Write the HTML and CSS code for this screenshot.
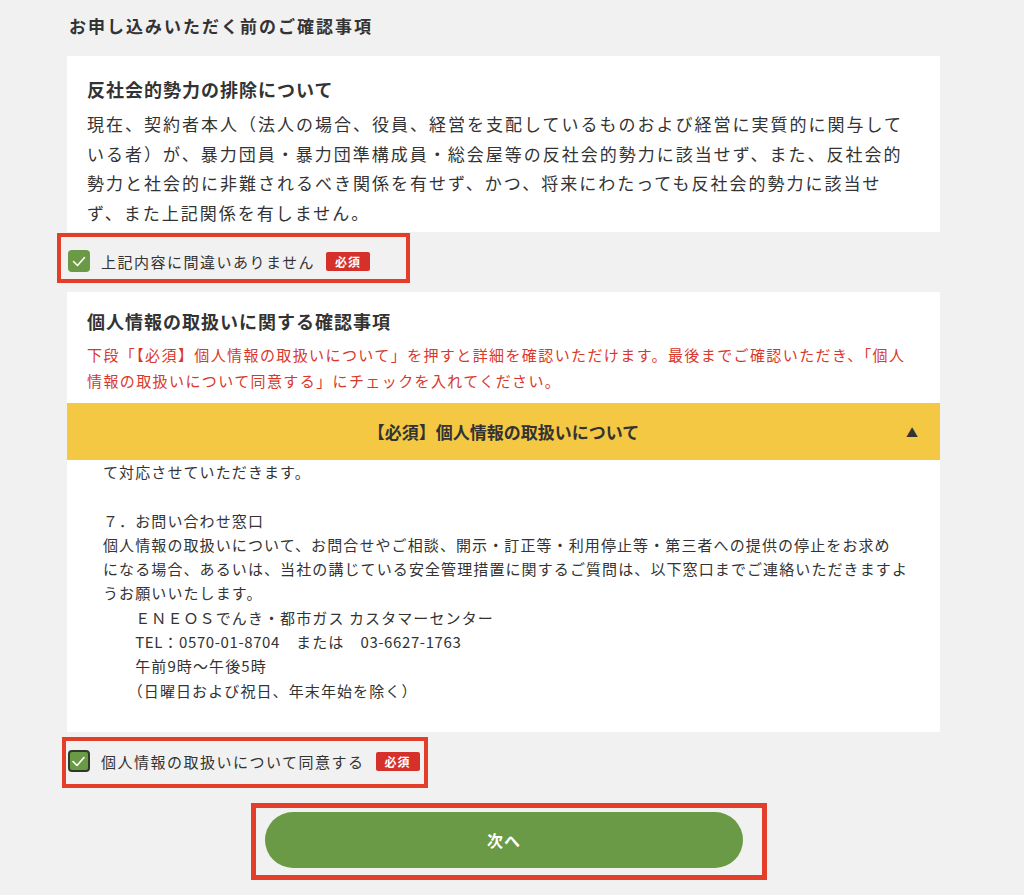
FILE: index.html
```html
<!DOCTYPE html>
<html lang="ja">
<head>
    <meta charset="UTF-8">
    <meta name="viewport" content="width=device-width, initial-scale=1.0">
    <title>お申し込みいただく前のご確認事項</title>
    <link rel="stylesheet" href="styles.css">
</head>
<body>
    <div class="page">
        <h1 class="page-title">お申し込みいただく前のご確認事項</h1>

        <!-- 反社会的勢力 -->
        <section class="card card-antisocial">
            <h2 class="card-title">反社会的勢力の排除について</h2>
            <p class="card-text">現在、契約者本人（法人の場合、役員、経営を支配しているものおよび経営に実質的に関与している者）が、暴力団員・暴力団準構成員・総会屋等の反社会的勢力に該当せず、また、反社会的勢力と社会的に非難されるべき関係を有せず、かつ、将来にわたっても反社会的勢力に該当せず、また上記関係を有しません。</p>
        </section>

        <div class="agree-row">
            <label class="agree agree-first">
                <span class="checkbox">
                    <svg viewBox="0 0 22 22" width="22" height="22"><polyline points="5.5,11.5 9.5,15.5 16.5,7.5" fill="none" stroke="#fff" stroke-width="1.6" stroke-linecap="round" stroke-linejoin="round"/></svg>
                </span>
                <span class="agree-label">上記内容に間違いありません</span>
                <span class="required">必須</span>
            </label>
        </div>

        <!-- 個人情報 -->
        <section class="card card-privacy">
            <div class="card-head">
                <h2 class="card-title">個人情報の取扱いに関する確認事項</h2>
                <p class="notice">下段「【必須】個人情報の取扱いについて」を押すと詳細を確認いただけます。最後までご確認いただき、「個人<br>情報の取扱いについて同意する」にチェックを入れてください。</p>
            </div>
            <div class="accordion-head">
                <span class="accordion-title">【必須】個人情報の取扱いについて</span>
                <span class="accordion-arrow">▲</span>
            </div>
            <div class="accordion-body">
                <p class="policy-text">て対応させていただきます。<br>
<br>
７．お問い合わせ窓口<br>
個人情報の取扱いについて、お問合せやご相談、開示・訂正等・利用停止等・第三者への提供の停止をお求め<br>
になる場合、あるいは、当社の講じている安全管理措置に関するご質問は、以下窓口までご連絡いただきますよ<br>
うお願いいたします。<br>
　　ＥＮＥＯＳでんき・都市ガス カスタマーセンター<br>
　　<span class="latin">TEL</span>：<span class="latin">0570-01-8704</span>　または　<span class="latin">03-6627-1763</span><br>
　　午前9時～午後5時<br>
　　（日曜日および祝日、年末年始を除く）</p>
            </div>
        </section>

        <div class="agree-row">
            <label class="agree agree-second">
                <span class="checkbox focused">
                    <svg viewBox="0 0 22 22" width="22" height="22"><polyline points="5,11.5 9,15.5 16,7.5" fill="none" stroke="#fff" stroke-width="1.6" stroke-linecap="round" stroke-linejoin="round"/></svg>
                </span>
                <span class="agree-label">個人情報の取扱いについて同意する</span>
                <span class="required">必須</span>
            </label>
        </div>

        <div class="next-row">
            <div class="next-mark">
                <button class="btn-next">次へ</button>
            </div>
        </div>
    </div>
</body>
</html>
```

FILE: styles.css
```css
* {
    margin: 0;
    padding: 0;
    box-sizing: border-box;
}

body {
    font-family: "Noto Sans CJK JP", "Noto Sans", sans-serif;
    background: #f1f1f1;
    color: #333;
}

.page {
    width: 873px;
    margin-left: 67px;
    padding-top: 13px;
}

.page-title {
    margin-left: 2px;
    margin-bottom: 17px;
    font-size: 17px;
    line-height: 26px;
    letter-spacing: 2px;
    font-weight: bold;
    color: #333;
}

/* Cards */
.card {
    background: #fff;
}

.card-antisocial {
    padding: 20px 30px 5px 20px;
}

.card-title {
    font-size: 18px;
    line-height: 26px;
    letter-spacing: 1px;
    font-weight: bold;
    color: #333;
}

.card-text {
    margin-top: 7px;
    font-size: 17px;
    line-height: 29.5px;
    letter-spacing: 2px;
}

.card-head {
    padding: 16px 20px 9px;
}

.notice {
    margin-top: 8px;
    font-size: 15px;
    line-height: 26px;
    letter-spacing: 1.4px;
    color: #d9372c;
}

/* Accordion */
.accordion-head {
    position: relative;
    height: 57px;
    background: #f5c843;
    display: flex;
    align-items: center;
    justify-content: center;
}

.accordion-title {
    font-size: 17px;
    font-weight: bold;
    color: #333;
}

.accordion-arrow {
    position: absolute;
    right: 22px;
    top: 50%;
    transform: translateY(-50%);
    font-size: 12px;
    color: #333;
}

.accordion-body {
    height: 272px;
    overflow: hidden;
    padding: 0 20px 0 36px;
}

.policy-text {
    font-size: 15px;
    line-height: 24.3px;
    letter-spacing: 1.1px;
    white-space: nowrap;
}

.policy-text .latin {
    letter-spacing: 0.6px;
}

/* Agree checkboxes */
.agree {
    display: inline-flex;
    align-items: center;
    gap: 11px;
    border: 4px solid #e23e2a;
}

.agree-first {
    margin-top: 1px;
    margin-left: -10px;
    padding: 13px 36px 7px 7px;
    margin-bottom: 9px;
}

.agree-second {
    margin-top: 5px;
    margin-left: -5px;
    padding: 9px 4px 12px 2px;
    margin-bottom: 15px;
}

.checkbox {
    width: 22px;
    height: 22px;
    border-radius: 4px;
    background: #6a9a45;
    display: flex;
}

.checkbox.focused {
    border: 2px solid #2e3a28;
}

.checkbox.focused svg {
    margin: -2px;
}

.agree-label {
    font-size: 15px;
    letter-spacing: 1.5px;
    color: #333;
}

.required {
    width: 44px;
    height: 19px;
    border-radius: 2px;
    background: #d6302a;
    color: #fff;
    font-size: 12px;
    font-weight: bold;
    line-height: 19px;
    text-align: center;
    letter-spacing: 1px;
}

/* Next button */
.next-row {
    padding-left: 184px;
}

.next-mark {
    display: inline-block;
    border: 5px solid #e23e2a;
    padding: 4px 19px 7px 9px;
}

.btn-next {
    display: block;
    width: 478px;
    height: 56px;
    border: none;
    border-radius: 28px;
    background: #6a9a45;
    color: #fff;
    font-family: inherit;
    font-size: 16px;
    font-weight: bold;
    letter-spacing: 1px;
}
```
